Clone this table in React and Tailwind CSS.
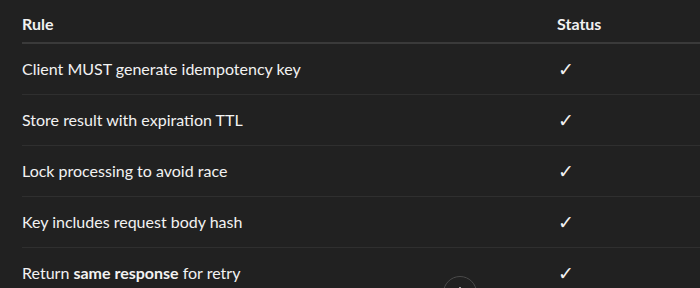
import { Plus } from "lucide-react";

export default function App() {
  const rows = [
    { rule: <>Client MUST generate idempotency key</> },
    { rule: <>Store result with expiration TTL</> },
    { rule: <>Lock processing to avoid race</> },
    { rule: <>Key includes request body hash</> },
    {
      rule: (
        <>
          Return <strong className="font-bold">same response</strong> for retry
        </>
      ),
    },
  ];

  return (
    <div
      className="relative w-[700px] h-[288px] overflow-hidden bg-[#212121] text-[#f2f2f2] text-[16px]"
      style={{ fontFamily: "Lato, 'Open Sans', sans-serif" }}
    >
      <div className="ml-[22px] w-[720px]">
        <div className="flex items-center h-[44px] pt-[6px] border-b-2 border-[#3a3a3a] font-bold">
          <div className="w-[535px]">Rule</div>
          <div>Status</div>
        </div>
        {rows.map((r, i) => (
          <div
            key={i}
            className="flex items-center h-[51px] border-b border-[#2f2f2f]"
          >
            <div className="w-[535px]">{r.rule}</div>
            <div
              className="text-[19px] leading-none pl-[1px]"
              style={{ fontFamily: "'DejaVu Sans', sans-serif" }}
            >
              ✓
            </div>
          </div>
        ))}
      </div>
      <div className="absolute left-[443px] top-[276px] w-[34px] h-[34px] rounded-full border border-[#4a4a4a] bg-[#212121] flex items-center justify-center">
        <Plus size={18} strokeWidth={2} color="#ffffff" />
      </div>
    </div>
  );
}
